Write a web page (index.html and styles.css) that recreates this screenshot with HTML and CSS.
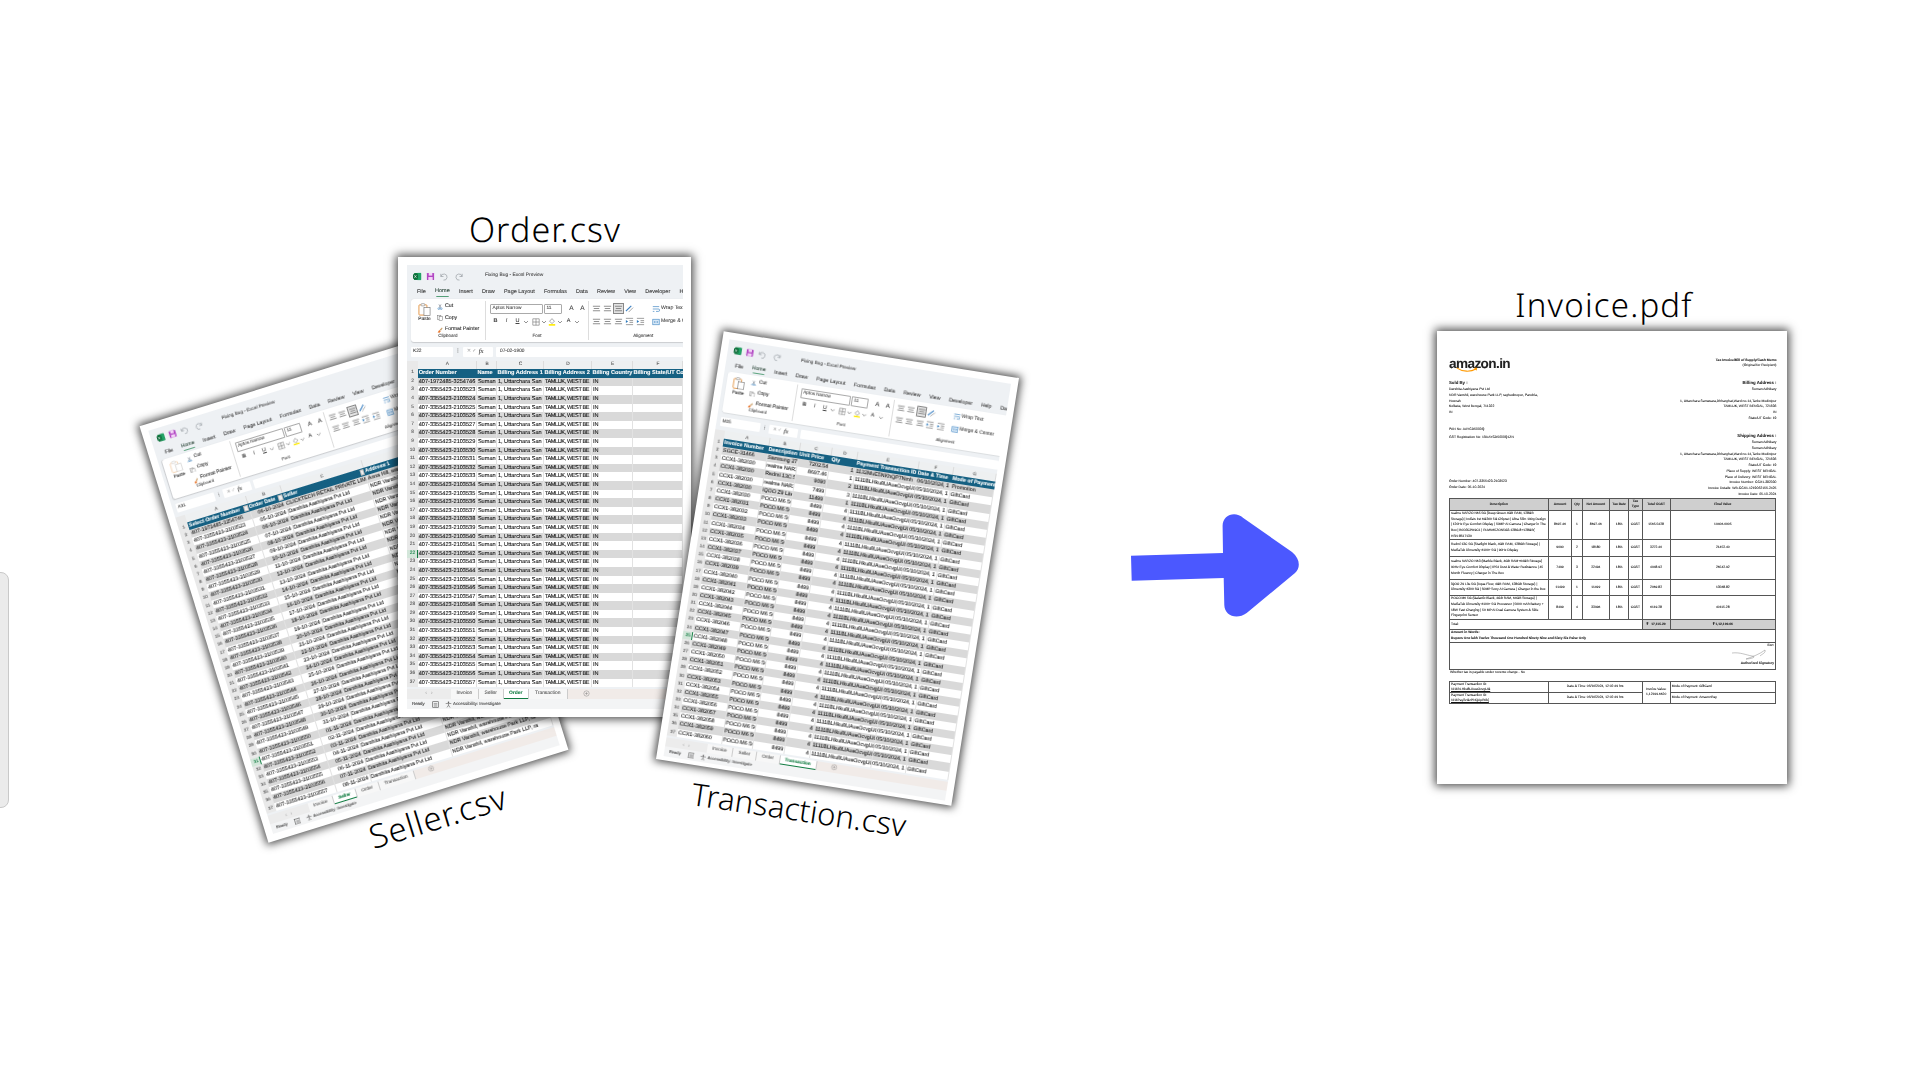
FILE: index.html
```html
<!DOCTYPE html>
<html lang="en">
<head>
<meta charset="utf-8">
<title>Order, Seller and Transaction files to Invoice</title>
<link rel="stylesheet" href="styles.css">
</head>
<body>
<svg class="defs" aria-hidden="true">
<symbol id="xls" viewBox="0 0 10 10"><rect x="1" y="1" width="8" height="8" rx="1" fill="#107c41"/><rect x="5" y="1" width="4" height="8" fill="#21a366"/><rect x="0" y="2.4" width="5.4" height="5.2" rx=".6" fill="#0b6a38"/><path d="M1.5 3.6 3.8 6.4M3.8 3.6 1.5 6.4" stroke="#fff" stroke-width=".7"/></symbol>
<symbol id="save" viewBox="0 0 10 10"><rect x="1" y="1" width="8" height="8" rx=".8" fill="#b146c2"/><rect x="3" y="1" width="4" height="3" fill="#f3d5f7"/><rect x="2.6" y="5.6" width="4.8" height="3.4" fill="#f3d5f7"/></symbol>
<symbol id="undo" viewBox="0 0 10 10"><path d="M2 2v3h3M2.2 5A3.4 3.4 0 1 1 5 9" fill="none" stroke="#9aa0a6" stroke-width=".8"/></symbol>
<symbol id="redo" viewBox="0 0 10 10"><path d="M8 2v3H5M7.8 5A3.4 3.4 0 1 0 5 9" fill="none" stroke="#9aa0a6" stroke-width=".8"/></symbol>
<symbol id="chev" viewBox="0 0 6 6"><path d="M1 2 3 4 5 2" fill="none" stroke="#666" stroke-width=".7"/></symbol>
<symbol id="paste" viewBox="0 0 14 14"><rect x="1" y="2" width="8.6" height="11" rx=".8" fill="#fff" stroke="#e0862a" stroke-width=".9"/><rect x="3.4" y=".7" width="3.8" height="2.4" rx=".6" fill="#fff" stroke="#8a8a8a" stroke-width=".7"/><rect x="6.4" y="5" width="6.6" height="8.4" fill="#fff" stroke="#777" stroke-width=".7"/></symbol>
<symbol id="cut" viewBox="0 0 8 8"><path d="M2.6 .5 4.8 5M5.4 .5 3.2 5" stroke="#5f6b7a" stroke-width=".7"/><circle cx="2.4" cy="6.2" r="1.2" fill="none" stroke="#2f7bbd" stroke-width=".7"/><circle cx="5.6" cy="6.2" r="1.2" fill="none" stroke="#2f7bbd" stroke-width=".7"/></symbol>
<symbol id="copy" viewBox="0 0 8 8"><rect x=".6" y=".6" width="4.6" height="5.6" fill="#fff" stroke="#666" stroke-width=".6"/><rect x="2.8" y="2" width="4.6" height="5.6" fill="#fff" stroke="#666" stroke-width=".6"/></symbol>
<symbol id="brush" viewBox="0 0 8 8"><path d="M.8 7.4 3 4 5 5.6 3.4 7.6Z" fill="#e8772e"/><path d="M3.6 3.6 6.6.8 7.4 1.8 5.2 5Z" fill="#c9a06a"/></symbol>
<symbol id="grid" viewBox="0 0 10 10"><path d="M1 1h8v8H1zM5 1v8M1 5h8" fill="none" stroke="#666" stroke-width=".7"/></symbol>
<symbol id="fill" viewBox="0 0 10 10"><path d="M5 .8 8 4 5 7 2 4Z" fill="#fff" stroke="#666" stroke-width=".7"/><rect x="1" y="7.6" width="8" height="2" fill="#ffeb00"/></symbol>
<symbol id="a3" viewBox="0 0 10 10"><path d="M1 2.5h8M2 5h6M1 7.5h8" stroke="#666" stroke-width=".8"/></symbol>
<symbol id="orient" viewBox="0 0 10 10"><path d="M1 8 7 2" stroke="#3a7fc1" stroke-width="1.3"/><path d="M4 9 9 4" stroke="#888" stroke-width=".8"/></symbol>
<symbol id="indent" viewBox="0 0 10 10"><path d="M1 1.5h8M5 4h4M5 6h4M1 8.500h8" stroke="#666" stroke-width=".7"/><path d="M1 3.400 3.500 5 1 6.600Z" fill="#2f7bbd"/></symbol>
<symbol id="wrap" viewBox="0 0 10 10"><path d="M1 2h8M1 5h7a1.500 1.500 0 0 1 0 3H5M1 8h2" fill="none" stroke="#2f7bbd" stroke-width=".8"/></symbol>
<symbol id="merge" viewBox="0 0 10 10"><rect x="1" y="1.500" width="8" height="7" fill="#d7e8f7" stroke="#2f7bbd" stroke-width=".7"/><path d="M2.500 5h5M3.500 4 2.500 5l1 1M6.500 4l1 1-1 1" fill="none" stroke="#2f7bbd" stroke-width=".5"/></symbol>
<symbol id="macro" viewBox="0 0 10 10"><rect x="1" y="1" width="8" height="8" fill="none" stroke="#555" stroke-width=".9"/><path d="M2.500 3.500h5M2.500 5.500h5M2.500 7.300h5" stroke="#555" stroke-width=".7"/></symbol>
<symbol id="acc" viewBox="0 0 10 10"><circle cx="5" cy="1.800" r="1.100" fill="#555"/><path d="M1 3.600h8M5 3.600v2.400M5 6 2.800 9.300M5 6l2.200 3.300" fill="none" stroke="#555" stroke-width=".8"/></symbol>
<symbol id="plus" viewBox="0 0 10 10"><circle cx="5" cy="5" r="3.800" fill="none" stroke="#777" stroke-width=".6"/><path d="M3 5h4M5 3v4" stroke="#777" stroke-width=".6"/></symbol>
</svg>

<main class="canvas">
<div class="handle"></div>

<section class="sheet seller">
<div class="xl xl-seller">
<header class="titlebar"><svg class="ti"><use href="#xls"/></svg><svg class="ti"><use href="#save"/></svg><svg class="ti gap"><use href="#undo"/></svg><svg class="ti gap"><use href="#redo"/></svg><span class="tt">Fixing Bug - Excel Preview</span></header>
<nav class="menu"><span>File</span><span class="on">Home</span><span>Insert</span><span>Draw</span><span>Page Layout</span><span>Formulas</span><span>Data</span><span>Review</span><span>View</span><span>Developer</span><span>Help</span></nav>
<div class="rib">
<div class="grp g1"><div class="gb"><div class="pst off"><svg><use href="#paste"/></svg><span>Paste</span></div><div class="cc"><span><svg><use href="#cut"/></svg>Cut</span><span><svg><use href="#copy"/></svg>Copy</span><span><svg><use href="#brush"/></svg>Format Painter</span></div></div><b class="gl">Clipboard</b></div>
<div class="grp g2"><div class="gb col"><div class="fr"><span class="dd">Aptos Narrow</span><span class="sz">11</span><span class="aa">A</span><span class="aa">A</span></div><div class="fr f2"><b class="x">B</b><i class="x">I</i><u class="x">U</u><svg class="ch"><use href="#chev"/></svg><svg class="ic sp"><use href="#grid"/></svg><svg class="ch"><use href="#chev"/></svg><svg class="ic"><use href="#fill"/></svg><svg class="ch"><use href="#chev"/></svg><span class="x">A</span><svg class="ch"><use href="#chev"/></svg></div></div><b class="gl">Font</b></div>
<div class="grp g3"><div class="gb"><div class="ag"><svg><use href="#a3"/></svg><svg><use href="#a3"/></svg><svg class="act"><use href="#a3"/></svg><svg><use href="#orient"/></svg><i></i><svg><use href="#a3"/></svg><svg><use href="#a3"/></svg><svg><use href="#a3"/></svg><svg><use href="#indent"/></svg><svg><use href="#indent"/></svg></div><div class="wm"><span><svg><use href="#wrap"/></svg>Wrap Text</span><span><svg><use href="#merge"/></svg>Merge &amp; Center</span></div></div><b class="gl">Alignment</b></div>
</div>
<div class="fbar"><span class="nm">A31</span><span class="dots">⋮</span><span class="fx">✕ ✓ <em>fx</em></span><span class="inp"></span></div>
<table class="grid">
<colgroup><col class="n"><col class="sa"><col class="sb"><col class="sc"><col></colgroup>
<thead><tr class="let"><th></th><td>A</td><td>B</td><td>C</td><td>D</td></tr></thead>
<tbody>
<tr class="hd"><th>1<td>Select Order Number<span class="fb"></span><td>Order Date<span class="fb"></span><td>Seller<span class="fb"></span><td>Address 1
<tr><th>2<td>407-1972485-3254746<td class="r">06-10-2024<td>CLICKTECH RETAIL PRIVATE LIMITED<td>Anna Hill, warehouse Park LLP
<tr><th>3<td>407-3355423-2103523<td class="r">05-10-2024<td>Darshita Aashiyana Pvt Ltd<td>NDR Vanshil, warehouse Park LLP, ra
<tr><th>4<td>407-3355423-2103524<td class="r">06-10-2024<td>Darshita Aashiyana Pvt Ltd<td>NDR Vanshil, warehouse Park LLP, ra
<tr><th>5<td>407-3355423-2103525<td class="r">07-10-2024<td>Darshita Aashiyana Pvt Ltd<td>NDR Vanshil, warehouse Park LLP, ra
<tr><th>6<td>407-3355423-2103526<td class="r">08-10-2024<td>Darshita Aashiyana Pvt Ltd<td>NDR Vanshil, warehouse Park LLP, ra
<tr><th>7<td>407-3355423-2103527<td class="r">09-10-2024<td>Darshita Aashiyana Pvt Ltd<td>NDR Vanshil, warehouse Park LLP, ra
<tr><th>8<td>407-3355423-2103528<td class="r">10-10-2024<td>Darshita Aashiyana Pvt Ltd<td>NDR Vanshil, warehouse Park LLP, ra
<tr><th>9<td>407-3355423-2103529<td class="r">11-10-2024<td>Darshita Aashiyana Pvt Ltd<td>NDR Vanshil, warehouse Park LLP, ra
<tr><th>10<td>407-3355423-2103530<td class="r">12-10-2024<td>Darshita Aashiyana Pvt Ltd<td>NDR Vanshil, warehouse Park LLP, ra
<tr><th>11<td>407-3355423-2103531<td class="r">13-10-2024<td>Darshita Aashiyana Pvt Ltd<td>NDR Vanshil, warehouse Park LLP, ra
<tr><th>12<td>407-3355423-2103532<td class="r">14-10-2024<td>Darshita Aashiyana Pvt Ltd<td>NDR Vanshil, warehouse Park LLP, ra
<tr><th>13<td>407-3355423-2103533<td class="r">15-10-2024<td>Darshita Aashiyana Pvt Ltd<td>NDR Vanshil, warehouse Park LLP, ra
<tr><th>14<td>407-3355423-2103534<td class="r">16-10-2024<td>Darshita Aashiyana Pvt Ltd<td>NDR Vanshil, warehouse Park LLP, ra
<tr><th>15<td>407-3355423-2103535<td class="r">17-10-2024<td>Darshita Aashiyana Pvt Ltd<td>NDR Vanshil, warehouse Park LLP, ra
<tr><th>16<td>407-3355423-2103536<td class="r">18-10-2024<td>Darshita Aashiyana Pvt Ltd<td>NDR Vanshil, warehouse Park LLP, ra
<tr><th>17<td>407-3355423-2103537<td class="r">19-10-2024<td>Darshita Aashiyana Pvt Ltd<td>NDR Vanshil, warehouse Park LLP, ra
<tr><th>18<td>407-3355423-2103538<td class="r">20-10-2024<td>Darshita Aashiyana Pvt Ltd<td>NDR Vanshil, warehouse Park LLP, ra
<tr><th>19<td>407-3355423-2103539<td class="r">21-10-2024<td>Darshita Aashiyana Pvt Ltd<td>NDR Vanshil, warehouse Park LLP, ra
<tr><th>20<td>407-3355423-2103540<td class="r">22-10-2024<td>Darshita Aashiyana Pvt Ltd<td>NDR Vanshil, warehouse Park LLP, ra
<tr><th>21<td>407-3355423-2103541<td class="r">23-10-2024<td>Darshita Aashiyana Pvt Ltd<td>NDR Vanshil, warehouse Park LLP, ra
<tr><th>22<td>407-3355423-2103542<td class="r">24-10-2024<td>Darshita Aashiyana Pvt Ltd<td>NDR Vanshil, warehouse Park LLP, ra
<tr><th>23<td>407-3355423-2103543<td class="r">25-10-2024<td>Darshita Aashiyana Pvt Ltd<td>NDR Vanshil, warehouse Park LLP, ra
<tr><th>24<td>407-3355423-2103544<td class="r">26-10-2024<td>Darshita Aashiyana Pvt Ltd<td>NDR Vanshil, warehouse Park LLP, ra
<tr><th>25<td>407-3355423-2103545<td class="r">27-10-2024<td>Darshita Aashiyana Pvt Ltd<td>NDR Vanshil, warehouse Park LLP, ra
<tr><th>26<td>407-3355423-2103546<td class="r">28-10-2024<td>Darshita Aashiyana Pvt Ltd<td>NDR Vanshil, warehouse Park LLP, ra
<tr><th>27<td>407-3355423-2103547<td class="r">29-10-2024<td>Darshita Aashiyana Pvt Ltd<td>NDR Vanshil, warehouse Park LLP, ra
<tr><th>28<td>407-3355423-2103548<td class="r">30-10-2024<td>Darshita Aashiyana Pvt Ltd<td>NDR Vanshil, warehouse Park LLP, ra
<tr><th>29<td>407-3355423-2103549<td class="r">31-10-2024<td>Darshita Aashiyana Pvt Ltd<td>NDR Vanshil, warehouse Park LLP, ra
<tr><th>30<td>407-3355423-2103550<td class="r">01-11-2024<td>Darshita Aashiyana Pvt Ltd<td>NDR Vanshil, warehouse Park LLP, ra
<tr class="sel"><th>31<td>407-3355423-2103551<td class="r">02-11-2024<td>Darshita Aashiyana Pvt Ltd<td>NDR Vanshil, warehouse Park LLP, ra
<tr><th>32<td>407-3355423-2103552<td class="r">03-11-2024<td>Darshita Aashiyana Pvt Ltd<td>NDR Vanshil, warehouse Park LLP, ra
<tr><th>33<td>407-3355423-2103553<td class="r">04-11-2024<td>Darshita Aashiyana Pvt Ltd<td>NDR Vanshil, warehouse Park LLP, ra
<tr><th>34<td>407-3355423-2103554<td class="r">05-11-2024<td>Darshita Aashiyana Pvt Ltd<td>NDR Vanshil, warehouse Park LLP, ra
<tr><th>35<td>407-3355423-2103555<td class="r">06-11-2024<td>Darshita Aashiyana Pvt Ltd<td>NDR Vanshil, warehouse Park LLP, ra
<tr><th>36<td>407-3355423-2103556<td class="r">07-11-2024<td>Darshita Aashiyana Pvt Ltd<td>NDR Vanshil, warehouse Park LLP, ra
<tr><th>37<td>407-3355423-2103557<td class="r">08-11-2024<td>Darshita Aashiyana Pvt Ltd<td>NDR Vanshil, warehouse Park LLP, ra
</tbody>
</table>
<div class="tabs"><span class="arr">‹ &nbsp; ›</span><span class="tab t1">Invoice</span><span class="tab t2 act">Seller</span><span class="tab t2">Order</span><span class="tab t3">Transaction</span><svg class="pl"><use href="#plus"/></svg></div>
<footer class="status"><span class="rdy">Ready</span><svg><use href="#macro"/></svg><svg><use href="#acc"/></svg><span>Accessibility: Investigate</span></footer>
</div>
</section>

<section class="sheet order">
<div class="xl xl-order">
<header class="titlebar"><svg class="ti"><use href="#xls"/></svg><svg class="ti"><use href="#save"/></svg><svg class="ti gap"><use href="#undo"/></svg><svg class="ti gap"><use href="#redo"/></svg><span class="tt">Fixing Bug - Excel Preview</span></header>
<nav class="menu"><span>File</span><span class="on">Home</span><span>Insert</span><span>Draw</span><span>Page Layout</span><span>Formulas</span><span>Data</span><span>Review</span><span>View</span><span>Developer</span><span>Help</span></nav>
<div class="rib">
<div class="grp g1"><div class="gb"><div class="pst"><svg><use href="#paste"/></svg><span>Paste</span></div><div class="cc"><span><svg><use href="#cut"/></svg>Cut</span><span><svg><use href="#copy"/></svg>Copy</span><span><svg><use href="#brush"/></svg>Format Painter</span></div></div><b class="gl">Clipboard</b></div>
<div class="grp g2"><div class="gb col"><div class="fr"><span class="dd">Aptos Narrow</span><span class="sz">11</span><span class="aa">A</span><span class="aa">A</span></div><div class="fr f2"><b class="x">B</b><i class="x">I</i><u class="x">U</u><svg class="ch"><use href="#chev"/></svg><svg class="ic sp"><use href="#grid"/></svg><svg class="ch"><use href="#chev"/></svg><svg class="ic"><use href="#fill"/></svg><svg class="ch"><use href="#chev"/></svg><span class="x">A</span><svg class="ch"><use href="#chev"/></svg></div></div><b class="gl">Font</b></div>
<div class="grp g3"><div class="gb"><div class="ag"><svg><use href="#a3"/></svg><svg><use href="#a3"/></svg><svg class="act"><use href="#a3"/></svg><svg><use href="#orient"/></svg><i></i><svg><use href="#a3"/></svg><svg><use href="#a3"/></svg><svg><use href="#a3"/></svg><svg><use href="#indent"/></svg><svg><use href="#indent"/></svg></div><div class="wm"><span><svg><use href="#wrap"/></svg>Wrap Text</span><span><svg><use href="#merge"/></svg>Merge &amp; Center</span></div></div><b class="gl">Alignment</b></div>
</div>
<div class="fbar"><span class="nm">K22</span><span class="dots">⋮</span><span class="fx">✕ ✓ <em>fx</em></span><span class="inp">07-02-1900</span></div>
<table class="grid">
<colgroup><col class="n"><col class="oa"><col class="ob"><col class="oc"><col class="od"><col class="oe"><col></colgroup>
<thead><tr class="let"><th></th><td>A</td><td>B</td><td>C</td><td>D</td><td>E</td><td>F</td></tr></thead>
<tbody>
<tr class="hd"><th>1<td>Order Number<td>Name<td>Billing Address 1<td>Billing Address 2<td>Billing Country<td>Billing State/UT Code
<tr><th>2<td>407-1972485-3254746<td>Suman<td>1, Uttarchara San<td>TAMLUK, WEST BE<td>IN<td>
<tr><th>3<td>407-3355423-2103523<td>Suman<td>1, Uttarchara San<td>TAMLUK, WEST BE<td>IN<td>
<tr><th>4<td>407-3355423-2103524<td>Suman<td>1, Uttarchara San<td>TAMLUK, WEST BE<td>IN<td>
<tr><th>5<td>407-3355423-2103525<td>Suman<td>1, Uttarchara San<td>TAMLUK, WEST BE<td>IN<td>
<tr><th>6<td>407-3355423-2103526<td>Suman<td>1, Uttarchara San<td>TAMLUK, WEST BE<td>IN<td>
<tr><th>7<td>407-3355423-2103527<td>Suman<td>1, Uttarchara San<td>TAMLUK, WEST BE<td>IN<td>
<tr><th>8<td>407-3355423-2103528<td>Suman<td>1, Uttarchara San<td>TAMLUK, WEST BE<td>IN<td>
<tr><th>9<td>407-3355423-2103529<td>Suman<td>1, Uttarchara San<td>TAMLUK, WEST BE<td>IN<td>
<tr><th>10<td>407-3355423-2103530<td>Suman<td>1, Uttarchara San<td>TAMLUK, WEST BE<td>IN<td>
<tr><th>11<td>407-3355423-2103531<td>Suman<td>1, Uttarchara San<td>TAMLUK, WEST BE<td>IN<td>
<tr><th>12<td>407-3355423-2103532<td>Suman<td>1, Uttarchara San<td>TAMLUK, WEST BE<td>IN<td>
<tr><th>13<td>407-3355423-2103533<td>Suman<td>1, Uttarchara San<td>TAMLUK, WEST BE<td>IN<td>
<tr><th>14<td>407-3355423-2103534<td>Suman<td>1, Uttarchara San<td>TAMLUK, WEST BE<td>IN<td>
<tr><th>15<td>407-3355423-2103535<td>Suman<td>1, Uttarchara San<td>TAMLUK, WEST BE<td>IN<td>
<tr><th>16<td>407-3355423-2103536<td>Suman<td>1, Uttarchara San<td>TAMLUK, WEST BE<td>IN<td>
<tr><th>17<td>407-3355423-2103537<td>Suman<td>1, Uttarchara San<td>TAMLUK, WEST BE<td>IN<td>
<tr><th>18<td>407-3355423-2103538<td>Suman<td>1, Uttarchara San<td>TAMLUK, WEST BE<td>IN<td>
<tr><th>19<td>407-3355423-2103539<td>Suman<td>1, Uttarchara San<td>TAMLUK, WEST BE<td>IN<td>
<tr><th>20<td>407-3355423-2103540<td>Suman<td>1, Uttarchara San<td>TAMLUK, WEST BE<td>IN<td>
<tr><th>21<td>407-3355423-2103541<td>Suman<td>1, Uttarchara San<td>TAMLUK, WEST BE<td>IN<td>
<tr class="sel"><th>22<td>407-3355423-2103542<td>Suman<td>1, Uttarchara San<td>TAMLUK, WEST BE<td>IN<td>
<tr><th>23<td>407-3355423-2103543<td>Suman<td>1, Uttarchara San<td>TAMLUK, WEST BE<td>IN<td>
<tr><th>24<td>407-3355423-2103544<td>Suman<td>1, Uttarchara San<td>TAMLUK, WEST BE<td>IN<td>
<tr><th>25<td>407-3355423-2103545<td>Suman<td>1, Uttarchara San<td>TAMLUK, WEST BE<td>IN<td>
<tr><th>26<td>407-3355423-2103546<td>Suman<td>1, Uttarchara San<td>TAMLUK, WEST BE<td>IN<td>
<tr><th>27<td>407-3355423-2103547<td>Suman<td>1, Uttarchara San<td>TAMLUK, WEST BE<td>IN<td>
<tr><th>28<td>407-3355423-2103548<td>Suman<td>1, Uttarchara San<td>TAMLUK, WEST BE<td>IN<td>
<tr><th>29<td>407-3355423-2103549<td>Suman<td>1, Uttarchara San<td>TAMLUK, WEST BE<td>IN<td>
<tr><th>30<td>407-3355423-2103550<td>Suman<td>1, Uttarchara San<td>TAMLUK, WEST BE<td>IN<td>
<tr><th>31<td>407-3355423-2103551<td>Suman<td>1, Uttarchara San<td>TAMLUK, WEST BE<td>IN<td>
<tr><th>32<td>407-3355423-2103552<td>Suman<td>1, Uttarchara San<td>TAMLUK, WEST BE<td>IN<td>
<tr><th>33<td>407-3355423-2103553<td>Suman<td>1, Uttarchara San<td>TAMLUK, WEST BE<td>IN<td>
<tr><th>34<td>407-3355423-2103554<td>Suman<td>1, Uttarchara San<td>TAMLUK, WEST BE<td>IN<td>
<tr><th>35<td>407-3355423-2103555<td>Suman<td>1, Uttarchara San<td>TAMLUK, WEST BE<td>IN<td>
<tr><th>36<td>407-3355423-2103556<td>Suman<td>1, Uttarchara San<td>TAMLUK, WEST BE<td>IN<td>
<tr><th>37<td>407-3355423-2103557<td>Suman<td>1, Uttarchara San<td>TAMLUK, WEST BE<td>IN<td>
</tbody>
</table>
<div class="tabs"><span class="arr">‹ &nbsp; ›</span><span class="tab t1">Invoice</span><span class="tab t2">Seller</span><span class="tab t2 act">Order</span><span class="tab t3">Transaction</span><svg class="pl"><use href="#plus"/></svg></div>
<footer class="status"><span class="rdy">Ready</span><svg><use href="#macro"/></svg><svg><use href="#acc"/></svg><span>Accessibility: Investigate</span></footer>
</div>
</section>

<section class="sheet trans">
<div class="xl xl-trans">
<header class="titlebar"><svg class="ti"><use href="#xls"/></svg><svg class="ti"><use href="#save"/></svg><svg class="ti gap"><use href="#undo"/></svg><svg class="ti gap"><use href="#redo"/></svg><span class="tt">Fixing Bug - Excel Preview</span></header>
<nav class="menu"><span>File</span><span class="on">Home</span><span>Insert</span><span>Draw</span><span>Page Layout</span><span>Formulas</span><span>Data</span><span>Review</span><span>View</span><span>Developer</span><span>Help</span><span>Data</span></nav>
<div class="rib">
<div class="grp g1"><div class="gb"><div class="pst"><svg><use href="#paste"/></svg><span>Paste</span></div><div class="cc"><span><svg><use href="#cut"/></svg>Cut</span><span><svg><use href="#copy"/></svg>Copy</span><span><svg><use href="#brush"/></svg>Format Painter</span></div></div><b class="gl">Clipboard</b></div>
<div class="grp g2"><div class="gb col"><div class="fr"><span class="dd">Aptos Narrow</span><span class="sz">11</span><span class="aa">A</span><span class="aa">A</span></div><div class="fr f2"><b class="x">B</b><i class="x">I</i><u class="x">U</u><svg class="ch"><use href="#chev"/></svg><svg class="ic sp"><use href="#grid"/></svg><svg class="ch"><use href="#chev"/></svg><svg class="ic"><use href="#fill"/></svg><svg class="ch"><use href="#chev"/></svg><span class="x">A</span><svg class="ch"><use href="#chev"/></svg></div></div><b class="gl">Font</b></div>
<div class="grp g3"><div class="gb"><div class="ag"><svg><use href="#a3"/></svg><svg><use href="#a3"/></svg><svg class="act"><use href="#a3"/></svg><svg><use href="#orient"/></svg><i></i><svg><use href="#a3"/></svg><svg><use href="#a3"/></svg><svg><use href="#a3"/></svg><svg><use href="#indent"/></svg><svg><use href="#indent"/></svg></div><div class="wm"><span><svg><use href="#wrap"/></svg>Wrap Text</span><span><svg><use href="#merge"/></svg>Merge &amp; Center</span></div></div><b class="gl">Alignment</b></div>
</div>
<div class="fbar"><span class="nm">M25</span><span class="dots">⋮</span><span class="fx">✕ ✓ <em>fx</em></span><span class="inp"></span></div>
<table class="grid">
<colgroup><col class="n"><col class="ta"><col class="tb"><col class="tc"><col class="td"><col class="te"><col class="tf"><col></colgroup>
<thead><tr class="let"><th></th><td>A</td><td>B</td><td>C</td><td>D</td><td>E</td><td>F</td><td>G</td></tr></thead>
<tbody>
<tr class="hd"><th>1<td>Invoice Number<td>Description<td>Unit Price<td>Qty<td>Payment Transaction ID<td>Date &amp; Time<td>Mode of Payment
<tr><th>2<td>SGCE-31466<td>Samsung 27<td class="r">7202.54<td class="r">1<td>1132MuE5NKhQP7Nmh<td>06/10/2024, 1<td>Promotion
<tr><th>3<td>CCX1-382030<td>realme NARZ<td class="r">8697.46<td class="r">1<td>1111BLHku8UAueOcvgUG<td>05/10/2024, 1<td>GiftCard
<tr><th>4<td>CCX1-382030<td>Redmi 13C 5<td class="r">9090<td class="r">2<td>1111BLHku8UAueOcvgUG<td>05/10/2024, 1<td>GiftCard
<tr><th>5<td>CCX1-382030<td>realme NARZ<td class="r">7499<td class="r">3<td>1111BLHku8UAueOcvgUG<td>05/10/2024, 1<td>GiftCard
<tr><th>6<td>CCX1-382030<td>iQOO Z9 Lite<td class="r">11499<td class="r">1<td>1111BLHku8UAueOcvgUG<td>05/10/2024, 1<td>GiftCard
<tr><th>7<td>CCX1-382030<td>POCO M6 5G<td class="r">8499<td class="r">4<td>1111BLHku8UAueOcvgUG<td>05/10/2024, 1<td>GiftCard
<tr><th>8<td>CCX1-382031<td>POCO M6 5G<td class="r">8499<td class="r">4<td>1111BLHku8UAueOcvgUG<td>05/10/2024, 1<td>GiftCard
<tr><th>9<td>CCX1-382032<td>POCO M6 5G<td class="r">8499<td class="r">4<td>1111BLHku8UAueOcvgUG<td>05/10/2024, 1<td>GiftCard
<tr><th>10<td>CCX1-382033<td>POCO M6 5G<td class="r">8499<td class="r">4<td>1111BLHku8UAueOcvgUG<td>05/10/2024, 1<td>GiftCard
<tr><th>11<td>CCX1-382034<td>POCO M6 5G<td class="r">8499<td class="r">4<td>1111BLHku8UAueOcvgUG<td>05/10/2024, 1<td>GiftCard
<tr><th>12<td>CCX1-382035<td>POCO M6 5G<td class="r">8499<td class="r">4<td>1111BLHku8UAueOcvgUG<td>05/10/2024, 1<td>GiftCard
<tr><th>13<td>CCX1-382036<td>POCO M6 5G<td class="r">8499<td class="r">4<td>1111BLHku8UAueOcvgUG<td>05/10/2024, 1<td>GiftCard
<tr><th>14<td>CCX1-382037<td>POCO M6 5G<td class="r">8499<td class="r">4<td>1111BLHku8UAueOcvgUG<td>05/10/2024, 1<td>GiftCard
<tr><th>15<td>CCX1-382038<td>POCO M6 5G<td class="r">8499<td class="r">4<td>1111BLHku8UAueOcvgUG<td>05/10/2024, 1<td>GiftCard
<tr><th>16<td>CCX1-382039<td>POCO M6 5G<td class="r">8499<td class="r">4<td>1111BLHku8UAueOcvgUG<td>05/10/2024, 1<td>GiftCard
<tr><th>17<td>CCX1-382040<td>POCO M6 5G<td class="r">8499<td class="r">4<td>1111BLHku8UAueOcvgUG<td>05/10/2024, 1<td>GiftCard
<tr><th>18<td>CCX1-382041<td>POCO M6 5G<td class="r">8499<td class="r">4<td>1111BLHku8UAueOcvgUG<td>05/10/2024, 1<td>GiftCard
<tr><th>19<td>CCX1-382042<td>POCO M6 5G<td class="r">8499<td class="r">4<td>1111BLHku8UAueOcvgUG<td>05/10/2024, 1<td>GiftCard
<tr><th>20<td>CCX1-382043<td>POCO M6 5G<td class="r">8499<td class="r">4<td>1111BLHku8UAueOcvgUG<td>05/10/2024, 1<td>GiftCard
<tr><th>21<td>CCX1-382044<td>POCO M6 5G<td class="r">8499<td class="r">4<td>1111BLHku8UAueOcvgUG<td>05/10/2024, 1<td>GiftCard
<tr><th>22<td>CCX1-382045<td>POCO M6 5G<td class="r">8499<td class="r">4<td>1111BLHku8UAueOcvgUG<td>05/10/2024, 1<td>GiftCard
<tr><th>23<td>CCX1-382046<td>POCO M6 5G<td class="r">8499<td class="r">4<td>1111BLHku8UAueOcvgUG<td>05/10/2024, 1<td>GiftCard
<tr><th>24<td>CCX1-382047<td>POCO M6 5G<td class="r">8499<td class="r">4<td>1111BLHku8UAueOcvgUG<td>05/10/2024, 1<td>GiftCard
<tr class="sel"><th>25<td>CCX1-382048<td>POCO M6 5G<td class="r">8499<td class="r">4<td>1111BLHku8UAueOcvgUG<td>05/10/2024, 1<td>GiftCard
<tr><th>26<td>CCX1-382049<td>POCO M6 5G<td class="r">8499<td class="r">4<td>1111BLHku8UAueOcvgUG<td>05/10/2024, 1<td>GiftCard
<tr><th>27<td>CCX1-382050<td>POCO M6 5G<td class="r">8499<td class="r">4<td>1111BLHku8UAueOcvgUG<td>05/10/2024, 1<td>GiftCard
<tr><th>28<td>CCX1-382051<td>POCO M6 5G<td class="r">8499<td class="r">4<td>1111BLHku8UAueOcvgUG<td>05/10/2024, 1<td>GiftCard
<tr><th>29<td>CCX1-382052<td>POCO M6 5G<td class="r">8499<td class="r">4<td>1111BLHku8UAueOcvgUG<td>05/10/2024, 1<td>GiftCard
<tr><th>30<td>CCX1-382053<td>POCO M6 5G<td class="r">8499<td class="r">4<td>1111BLHku8UAueOcvgUG<td>05/10/2024, 1<td>GiftCard
<tr><th>31<td>CCX1-382054<td>POCO M6 5G<td class="r">8499<td class="r">4<td>1111BLHku8UAueOcvgUG<td>05/10/2024, 1<td>GiftCard
<tr><th>32<td>CCX1-382055<td>POCO M6 5G<td class="r">8499<td class="r">4<td>1111BLHku8UAueOcvgUG<td>05/10/2024, 1<td>GiftCard
<tr><th>33<td>CCX1-382056<td>POCO M6 5G<td class="r">8499<td class="r">4<td>1111BLHku8UAueOcvgUG<td>05/10/2024, 1<td>GiftCard
<tr><th>34<td>CCX1-382057<td>POCO M6 5G<td class="r">8499<td class="r">4<td>1111BLHku8UAueOcvgUG<td>05/10/2024, 1<td>GiftCard
<tr><th>35<td>CCX1-382058<td>POCO M6 5G<td class="r">8499<td class="r">4<td>1111BLHku8UAueOcvgUG<td>05/10/2024, 1<td>GiftCard
<tr><th>36<td>CCX1-382059<td>POCO M6 5G<td class="r">8499<td class="r">4<td>1111BLHku8UAueOcvgUG<td>05/10/2024, 1<td>GiftCard
<tr><th>37<td>CCX1-382060<td>POCO M6 5G<td class="r">8499<td class="r">4<td>1111BLHku8UAueOcvgUG<td>05/10/2024, 1<td>GiftCard
</tbody>
</table>
<div class="tabs"><span class="arr">‹ &nbsp; ›</span><span class="tab t1">Invoice</span><span class="tab t2">Seller</span><span class="tab t2">Order</span><span class="tab t3 act">Transaction</span><svg class="pl"><use href="#plus"/></svg></div>
<footer class="status"><span class="rdy">Ready</span><svg><use href="#macro"/></svg><svg><use href="#acc"/></svg><span>Accessibility: Investigate</span></footer>
</div>
</section>

<h2 class="cap cap-order">Order.csv</h2>
<h2 class="cap cap-seller">Seller.csv</h2>
<h2 class="cap cap-trans">Transaction.csv</h2>
<h2 class="cap cap-inv">Invoice.pdf</h2>

<svg class="arrow" viewBox="1120 505 190 120" aria-hidden="true"><path d="M1131 555.700 1223 553 1222.600 526C1222.500 515 1235 510.500 1243.300 518L1292 552C1300.500 559 1300.500 568 1295 573L1246.700 613C1237 620 1224.500 616 1224.300 605L1223.700 578 1131.700 580.700Z"/></svg>

<article class="invoice">
<div class="inv-body">
<div class="inv-top">
<div class="logo"><span>amazon.in</span><svg viewBox="0 0 26 7" aria-hidden="true"><path d="M1 1C8 6 17 6 24 2" fill="none" stroke="#f90" stroke-width="1.300"/><path d="M21 .8 25 1 24 4.500Z" fill="#f90"/></svg></div>
<div class="ttl"><b>Tax Invoice/Bill of Supply/Cash Memo</b><p>(Original for Recipient)</p></div>
</div>
<div class="inv-mid">
<div class="lc">
<h4>Sold By :</h4>
<p>Darshita Aashiyana Pvt Ltd</p><p>NDR Vanshil, warehouse Park LLP, raghudinepur, Panchla,</p><p>Howrah</p><p>Kolkata, West Bengal, 711322</p><p>IN</p>
<p class="pan">PAN No: AAYCD5000Q</p><p class="gst">GST Registration No: 19AAYCD5000Q1ZN</p>
<p class="ord">Order Number: 407-3355423-2103523</p><p>Order Date: 05-10-2024</p>
</div>
<div class="rc">
<h4>Billing Address :</h4>
<p>Suman Adhikary</p><p class="sk">1, Uttarchara Samasara,Dhharghat,Ward no-14,Tarbe Medinipur</p><p>TAMLUK, WEST BENGAL, 721636</p><p>IN</p><p>State/UT Code: 19</p>
<h4 class="sh">Shipping Address :</h4>
<p>Suman Adhikary</p><p>Suman Adhikary</p><p>1, Uttarchara Samasara,Dhharghat,Ward no-14,Tarbe Medinipur</p><p>TAMLUK, WEST BENGAL, 721636</p><p>State/UT Code: 19</p><p>Place of Supply: WEST BENGAL</p><p>Place of Delivery: WEST BENGAL</p><p>Invoice Number: CCX1-382030</p><p>Invoice Details: WB-CCX1-1219062155-2425</p><p>Invoice Date: 05-10-2024</p>
</div>
</div>
<table class="items">
<colgroup><col class="c1"><col class="c2"><col class="c3"><col class="c4"><col class="c5"><col class="c6"><col class="c7"><col class="c8"></colgroup>
<thead><tr class="rh"><th>Description<th>Amount<th>Qty<th>Net Amount<th>Tax Rate<th>Tax Type<th>Total CGST<th>Final Value</thead>
<tbody>
<tr class="r1"><td class="dsc">realme NARZO N65 5G (Deep Green 4GB RAM, 128GB Storage) | India's 1st 6G300 5G Chipset | Ultra Slim 190g Design | 120Hz Eye Comfort Display | 50MP AI Camera | Charger in The Box | B0D3CPK9C1 | RLMN65ZON5G3-128G-8+128GB( HSN:8517130<td>8697.46<td>1<td>8697.46<td>18%<td>CGST<td>1565.5428<td>10406.0005
<tr class="r2"><td class="dsc">Redmi 13C 5G (Starlight Black, 4GB RAM, 128GB Storage) | MediaTek Dimensity 6100+ 5G | 90Hz Display<td>9090<td>2<td>18180<td>18%<td>CGST<td>3272.40<td>21452.40
<tr class="r3"><td class="dsc">realme NARZO N63 (Marble Black, 4GB RAM+64GB Storage) 90Hz Eye Comfort Display | IP54 Dust &amp; Water Resistance | 45 Month Fluency | Charger in The Box<td>7499<td>3<td>22494<td>18%<td>CGST<td>4048.92<td>26542.92
<tr class="r2"><td class="dsc">iQOO Z9 Lite 5G (Aqua Flow, 4GB RAM, 128GB Storage) | Dimensity 6300 5G | 50MP Sony AI Camera | Charger in the Box<td>11499<td>1<td>11499<td>18%<td>CGST<td>2069.82<td>13568.82
<tr class="r5"><td class="dsc">POCO M6 5G (Galactic Black, 4GB RAM, 64GB Storage) | MediaTek Dimensity 6100+ 5G Processor | 5000 mAh Battery + 18W Fast Charging | 50 MP AI Dual Camera System &amp; Side Fingerprint Sensor<td>8499<td>4<td>33996<td>18%<td>CGST<td>6119.28<td>40115.28
<tr class="rt"><td colspan="6" class="dsc">Total:<th>₹ &nbsp; 17,115.29<th>₹ 1,12,199.66
<tr class="rw"><td colspan="8" class="dsc"><b>Amount in Words:</b><br><b>Rupees One lakh Twelve Thousand One Hundred Ninety Nine and Sixty Six Paise Only</b>
<tr class="rs"><td colspan="8" class="sig"><b>For:</b><svg viewBox="0 0 36 12" aria-hidden="true"><path d="M0 4C8 3 14 6 20 7 26 8 18 10 14 10 20 8 28 5 33 1 34 4 30 5 28 7" fill="none" stroke="#888" stroke-width=".5"/></svg><b>Authorized Signatory</b>
</tbody>
</table>
<p class="rev">Whether tax is payable under reverse charge - No</p>
<table class="items pay">
<colgroup><col class="c1"><col class="p2"><col class="c7"><col class="c8"></colgroup>
<tbody>
<tr><td class="dsc">Payment Transaction ID:<br><u>1111BLHku8UAueOcvgUG</u><td>Date &amp; Time: 05/10/2024, 12:02:49 hrs<td rowspan="2">Invoice Value:<br>1,12199.6620<td class="dsc">Mode of Payment: GiftCard
<tr><td class="dsc">Payment Transaction ID:<br><u>1111Pay2zGzPNQApPAbj</u><td>Date &amp; Time: 05/10/2024, 12:02:49 hrs<td class="dsc">Mode of Payment: AmazonPay
</tbody>
</table>
</div>
</article>
</main>
</body>
</html>
```

FILE: styles.css
```css
html, body { margin: 0; background: #fff; }
.defs { position: absolute; width: 0; height: 0; }
.canvas { position: relative; width: 1919px; height: 1079px; overflow: hidden; background: #fff; font-family: "Liberation Sans", Arial, sans-serif; text-rendering: geometricPrecision; }

.handle { position: absolute; left: -10px; top: 572px; width: 17px; height: 234px; background: #ebebeb; border: 1px solid #c9c9c9; border-radius: 8px; }

.cap { position: absolute; margin: 0; font: 300 33px/44px "Noto Sans", sans-serif; letter-spacing: 1.200px; color: #000; white-space: nowrap; transform: translateX(-50%); }
.cap-order { left: 545px; top: 207px; font-size: 34px; letter-spacing: 1.100px; }
.cap-inv { left: 1604px; top: 283px; }
.cap-seller { left: 438px; top: 795px; letter-spacing: 1px; transform: translateX(-50%) rotate(-17deg); }
.cap-trans { left: 799px; top: 788px; font-size: 31px; letter-spacing: .2px; transform: translateX(-50%) rotate(8.5deg); }

.sheet { position: absolute; box-sizing: border-box; background: #fff; box-shadow: 0 0 9px 2px rgba(0,0,0,.72); }
.order { left: 398px; top: 257px; width: 293px; height: 460px; padding: 8px 8px 8px 9px; }
.seller { left: 197px; top: 370px; width: 314px; height: 436px; padding: 7px; transform: rotate(-17.2deg); }
.trans { left: 688px; top: 352px; width: 299px; height: 433px; padding: 7px; transform: rotate(9deg); }

.xl { display: flex; flex-direction: column; height: 444px; background: #eef1f4; overflow: hidden; filter: blur(.3px); color: #222; font-size: 5.300px; line-height: 1; -webkit-text-stroke: .08px currentColor; }
.xl-order { width: 276px; }
.xl-order tbody td:nth-child(5) { letter-spacing: -.42px; }
.xl-order tbody .hd td:nth-child(5) { letter-spacing: 0; }
.xl-seller { width: 316px; zoom: .95; }
.xl-trans { width: 300px; zoom: .95; }

.titlebar { display: flex; align-items: center; height: 22px; padding-left: 6px; flex: none; }
.ti { width: 9px; height: 9px; margin-right: 4px; flex: none; }
.ti.gap { margin-right: 7px; }
.tt { margin-left: 14px; color: #444; font-size: 4.900px; }

.menu { display: flex; align-items: center; gap: 9.200px; height: 11px; padding-left: 10px; flex: none; color: #333; font-size: 5.500px; white-space: nowrap; }
.menu .on { color: #1e3a2c; box-shadow: 0 2px 0 -1.300px #107c41; padding-bottom: 1px; }

.rib { display: flex; flex: none; height: 42.700px; margin: 1px 0 0 4px; background: #fff; border-radius: 3px 0 0 3px; box-shadow: 0 .5px 1px rgba(0,0,0,.15); overflow: hidden; }
.grp { display: flex; flex-direction: column; flex: none; border-right: .6px solid #ddd; margin: 2px 0; }
.g1 { width: 74px; }
.g2 { width: 102px; }
.g3 { flex: 1; border: 0; }
.gb { display: flex; flex: 1; min-height: 0; }
.gb.col { flex-direction: column; padding: 3px 0 0 4px; gap: 3.500px; }
.gl { height: 6px; text-align: center; font-weight: 400; font-size: 4.500px; color: #444; flex: none; }

.pst { display: flex; flex-direction: column; align-items: center; width: 26px; padding: 2px 0 0 1px; font-size: 4.800px; flex: none; box-sizing: border-box; gap: 2px; }
.pst svg { width: 13px; height: 13px; }
.pst.off svg { opacity: .4; }
.cc { display: flex; flex-direction: column; gap: 5.800px; padding-top: 2.500px; white-space: nowrap; font-size: 5.200px; }
.cc span { display: flex; align-items: center; }
.cc svg { width: 6px; height: 6px; margin-right: 2px; flex: none; }

.fr { display: flex; align-items: center; height: 10px; }
.dd, .sz { box-sizing: border-box; display: flex; align-items: center; height: 10px; border: .6px solid #aaa; border-radius: 1px; padding-left: 1.500px; font-size: 4.800px; color: #444; margin-right: 1px; }
.dd { width: 53px; }
.sz { width: 18px; margin-right: 4px; }
.aa { width: 11px; text-align: center; font-size: 6.500px; color: #444; }
.f2 { height: 9px; }
.x { width: 11px; text-align: center; font-size: 5.500px; color: #444; }
.ch { width: 6px; height: 6px; flex: none; }
.ic { width: 8px; height: 8px; flex: none; margin: 0 1px; }
.ic.sp { margin-left: 3px; }

.ag { display: grid; grid-template-columns: repeat(5, 11px); grid-template-rows: 9px 9px; gap: 4px 0; padding: 3px 0 0 3px; flex: none; }
.ag svg { width: 9px; height: 9px; }
.ag .act { background: #e3e3e3; outline: .6px solid #888; }
.wm { display: flex; flex-direction: column; gap: 5.500px; padding: 3.500px 0 0 5px; white-space: nowrap; font-size: 5.200px; color: #444; }
.wm span { display: flex; align-items: center; }
.wm svg { width: 8px; height: 8px; margin-right: 1px; flex: none; }

.fbar { display: flex; align-items: center; height: 10px; margin: 5.300px 0 3.700px 4px; flex: none; color: #444; font-size: 4.800px; }
.nm, .fx, .inp { display: flex; align-items: center; height: 10px; background: #fff; box-sizing: border-box; border-radius: 1px; }
.nm { width: 42px; padding-left: 2px; }
.dots { width: 10px; text-align: center; }
.fx { width: 30px; padding-left: 4px; gap: 1px; color: #aaa; white-space: pre; }
.fx em { color: #333; font-family: "Liberation Serif", serif; font-size: 6.500px; }
.inp { flex: 1; margin-left: 3px; padding-left: 4px; }

.grid { flex: none; width: 100%; table-layout: fixed; border-collapse: collapse; background: #fff; }
.n { width: 11px; }
.oa { width: 58.700px; } .ob { width: 20px; } .oc { width: 47px; } .od { width: 48px; } .oe { width: 41px; }
.sa { width: 66px; } .sb { width: 38px; } .sc { width: 90px; }
.ta { width: 47px; } .tb { width: 33px; } .tc { width: 34px; } .td { width: 27px; } .te { width: 65px; } .tf { width: 37px; }
.grid tr { height: 8.590px; }
.grid td, .grid th { padding: 0 0 0 .7px; overflow: hidden; white-space: nowrap; font-size: 5.600px; line-height: 8.590px; height: 8.590px; box-sizing: border-box; }
.grid td { border-right: .6px solid #e2e2e2; color: #111; }
.grid th { background: #e9e9e9; color: #555; font-weight: 400; text-align: center; font-size: 4.800px; padding: 0; }
.grid td.r { text-align: right; padding-right: 1px; }
.grid tbody tr:nth-child(even) td { background: #d9d9d9; }
.grid tbody .sel th { background: #d3e6da; color: #107c41; box-shadow: inset -1px 0 0 #107c41; }
.grid .let td { background: #eef0f1; color: #555; text-align: center; font-size: 4.800px; border-right: .6px solid #dcdcdc; height: 8.500px; }
.grid .let { height: 8.500px; }
.grid tbody .hd td { background: #156082; color: #fff; font-weight: 700; border-right: 0; }
.fb { float: right; width: 5px; height: 5.500px; margin: 1.500px .5px 0 0; background: #eee; border: .3px solid #bbb; box-sizing: border-box; }

.tabs { display: flex; align-items: flex-end; height: 10px; margin-top: 2px; background: #f1ebe8; flex: none; font-size: 4.900px; color: #555; }
.arr { width: 43.700px; align-self: center; text-align: center; color: #aaa; flex: none; background: #ececec; height: 100%; line-height: 10px; }
.tab { box-sizing: border-box; height: 100%; display: flex; align-items: center; justify-content: center; background: #f7f7f7; border-right: .6px solid #ccc; flex: none; }
.t1 { width: 28px; } .t2 { width: 25px; } .t3 { width: 39px; }
.tab.act { background: #fff; color: #107c41; font-weight: 700; box-shadow: inset 0 -1px 0 #107c41; }
.pl { width: 7px; height: 7px; margin: 0 0 1.500px 15px; flex: none; align-self: center; }

.status { display: flex; align-items: center; height: 10px; padding-left: 5px; background: #f3f4f5; flex: none; color: #444; font-size: 4.400px; }
.rdy { width: 20px; color: #333; }
.status svg { width: 7px; height: 7px; margin-right: 6px; flex: none; }
.status svg + svg { margin-right: 1px; }

.arrow { position: absolute; left: 1120px; top: 505px; width: 190px; height: 120px; }
.arrow path { fill: #4b58ff; }

.invoice { position: absolute; left: 1437px; top: 331px; width: 350px; height: 453px; background: #fff; box-shadow: 0 0 9px 2px rgba(0,0,0,.72); }
.inv-body { display: flex; flex-direction: column; height: 100%; box-sizing: border-box; padding: 26.500px 10.500px 0 12px; filter: blur(.35px); color: #111; font-size: 3.400px; line-height: 5.750px; -webkit-text-stroke: .06px currentColor; }
.inv-body p { margin: 0; white-space: nowrap; }
.inv-top { display: flex; justify-content: space-between; align-items: flex-start; height: 19px; flex: none; }
.logo { position: relative; width: 58px; font-weight: 700; font-size: 13.600px; line-height: 12px; letter-spacing: -.6px; color: #222; }
.logo svg { position: absolute; left: 5px; top: 9.500px; width: 26px; height: 6px; }
.ttl { text-align: right; padding-top: 0; }
.ttl b { color: #111; }
.inv-mid { display: flex; justify-content: space-between; height: 118px; flex: none; padding-top: 3.500px; }
.lc, .rc { display: flex; flex-direction: column; }
.rc { text-align: right; }
.inv-mid h4 { margin: 0 0 1px; font-size: 4.300px; line-height: 6px; font-weight: 700; color: #222; }
.rc .sk { margin-top: 5.750px; }
.rc .sh { margin-top: 11.500px; }
.pan { margin-top: 11px !important; }
.gst { margin-top: 2px !important; }
.ord { margin-top: 39px !important; }

.items { flex: none; width: 327px; table-layout: fixed; border-collapse: collapse; border: 1px solid #555; }
.c1 { width: 98.700px; } .c2 { width: 23.700px; } .c3 { width: 10.300px; } .c4 { width: 27.300px; } .c5 { width: 19.300px; } .c6 { width: 13.300px; } .c7 { width: 28px; }
.p2 { width: 94px; }
.items td, .items th { border: .7px solid #555; padding: 0 1px; text-align: center; vertical-align: middle; font-size: 3.300px; line-height: 5.700px; overflow: hidden; }
.items th { background: #cfcfcf; font-weight: 700; color: #222; }
.items td.dsc { text-align: left; }
.rh { height: 10.500px; } .rh th { line-height: 5.400px; }
.r1 { height: 28.300px; } .r2 { height: 16.700px; } .r3 { height: 22.600px; } .r5 { height: 22.300px; }
.rt { height: 10px; } .rw { height: 12.500px; } .rs { height: 27.500px; }
.rw td { line-height: 5.500px; }
.items td.sig { position: relative; text-align: right; vertical-align: top; line-height: 4.500px; }
.sig b { display: block; color: #222; }
.sig svg { display: block; margin: 2px 0 0 auto; width: 36px; height: 12px; padding-right: 6px; }
.rev { padding: 0 1px; height: 8px; flex: none; }
.pay { margin-top: 2.500px; }
.pay tr { height: 11px; }
.pay td { line-height: 5px; }
```
